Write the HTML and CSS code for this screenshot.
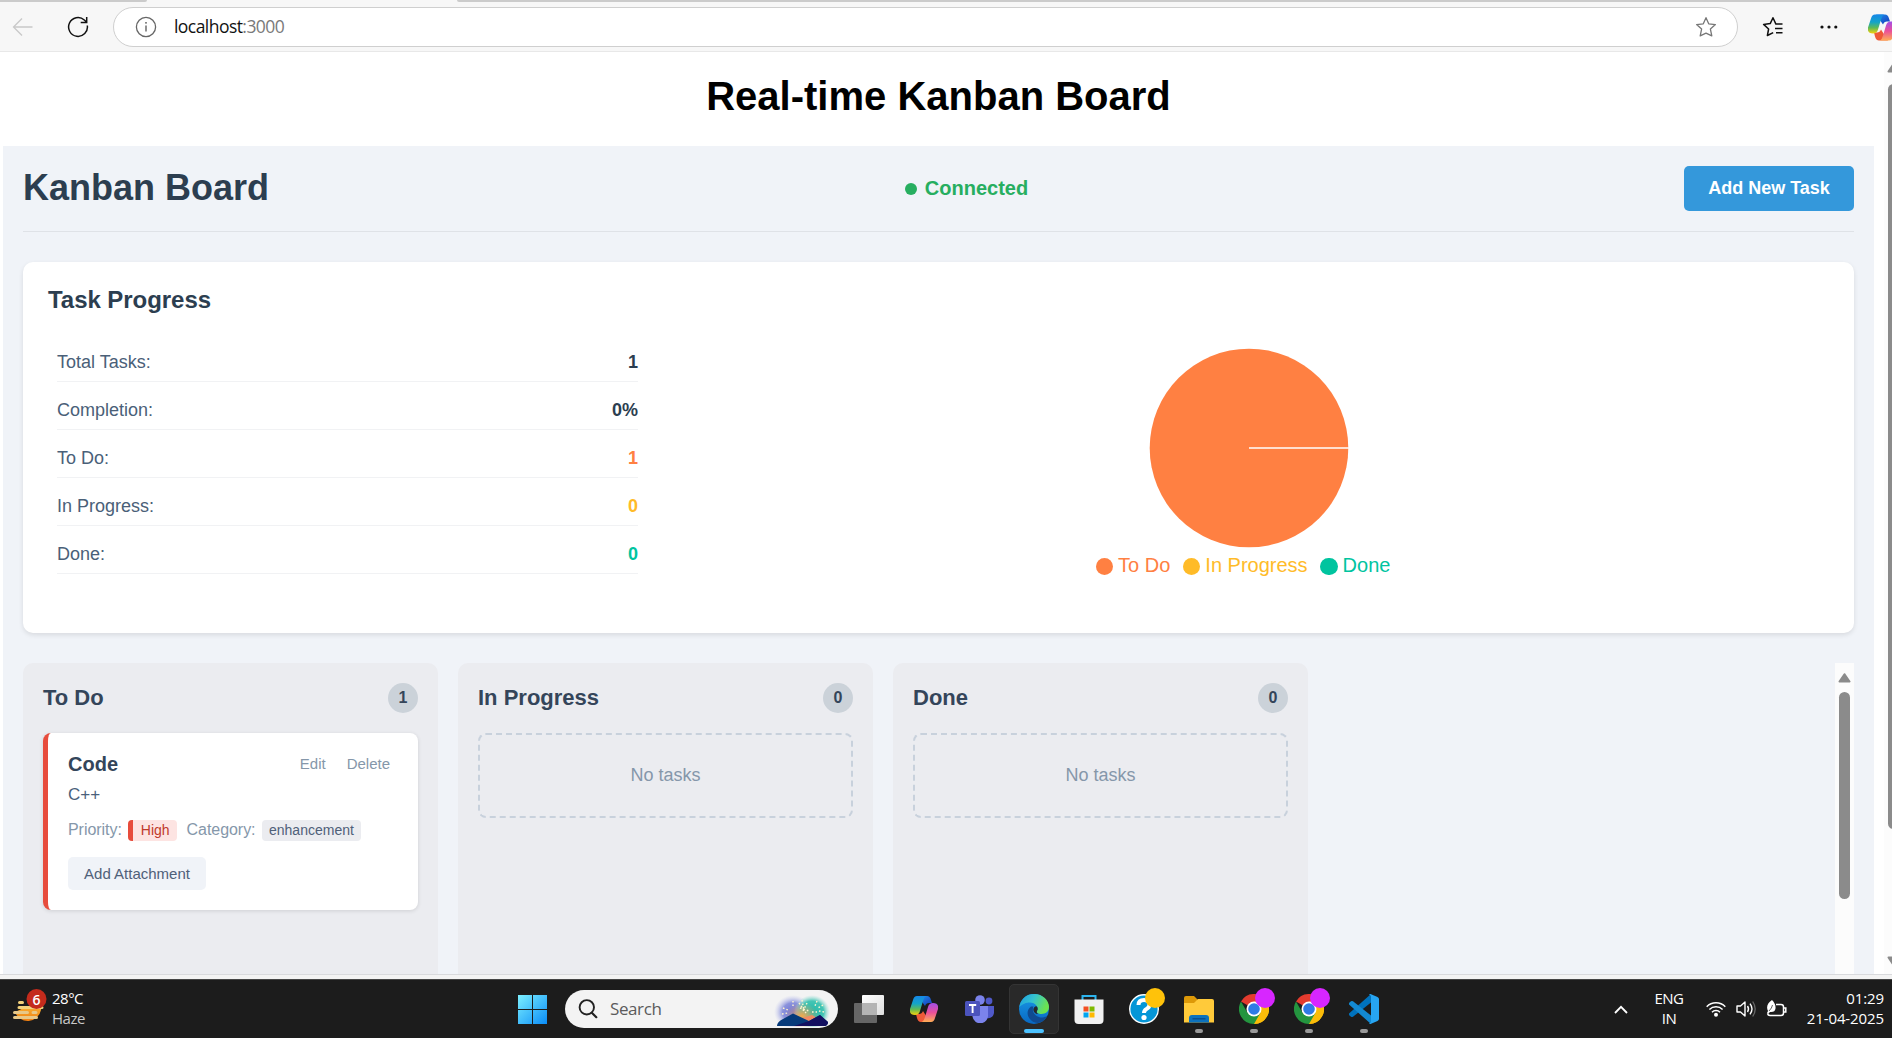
FILE: index.html
```html
<!DOCTYPE html>
<html lang="en">
<head>
<meta charset="utf-8">
<title>Kanban Board</title>
<link rel="stylesheet" href="styles.css">
</head>
<body>
<header class="browser">
  <div class="tabs"><span class="tab-left"></span><span class="tab-right"></span></div>
  <div class="toolbar">
    <svg class="back" width="22" height="20" viewBox="0 0 22 20"><path d="M20.5 10H1.5M10 1.5L1.5 10l8.500 8.500" fill="none" stroke="#c9c9c9" stroke-width="1.3"/></svg>
    <svg class="reload" width="22" height="22" viewBox="0 0 22 22"><path d="M20.300 9.500a9.400 9.400 0 1 1-3-5.500l2.500 2.300M19.700 1v5.500h-6" fill="none" stroke="#111" stroke-width="1.500"/></svg>
    <div class="address">
      <svg width="22" height="22" viewBox="0 0 22 22"><circle cx="11" cy="11" r="9.600" fill="none" stroke="#666" stroke-width="1.300"/><path d="M11 9.500v6" stroke="#555" stroke-width="1.300"/><circle cx="11" cy="6.800" r=".9" fill="#555"/></svg>
      <span class="url">localhost<span class="port">:3000</span></span>
      <svg class="star" width="22" height="22" viewBox="0 0 22 22"><path d="M11 1.700l2.700 6.100 6.700.8-5 4.500 1.400 6.800L11 17.200l-5.800 2.700 1.400-6.800-5-4.500 6.700-.8z" fill="none" stroke="#777" stroke-width="1.300" stroke-linejoin="round"/></svg>
    </div>
    <svg class="favorites" width="22" height="22" viewBox="0 0 22 22"><path d="M20.500 8.100h-6.600L11 1.700 8.200 7.600l-6.600.8 5 4.600-1.200 6.500 5.800-2.900" fill="none" stroke="#111" stroke-width="1.500" stroke-linejoin="round"/><path d="M13 12.500h7.500M14 16.700h6.500" stroke="#111" stroke-width="1.500"/></svg>
    <svg class="more" width="18" height="6" viewBox="0 0 18 6"><g fill="#111"><circle cx="2" cy="3" r="1.600"/><circle cx="9" cy="3" r="1.600"/><circle cx="15.800" cy="3" r="1.600"/></g></svg>
    <svg class="copilot-top" width="28" height="27" viewBox="0 0 28 26"><use href="#copilot"/></svg>
  </div>
</header>

<div class="viewport">
  <main class="page">
    <h1 class="page-title">Real-time Kanban Board</h1>
    <div class="app">
      <div class="app-head">
        <h2 class="app-title">Kanban Board</h2>
        <div class="status"><span class="status-dot"></span>Connected</div>
        <button class="btn-add">Add New Task</button>
      </div>
      <section class="progress">
        <h3 class="progress-title">Task Progress</h3>
        <div class="progress-body">
          <div class="stats">
            <div class="stat"><span>Total Tasks:</span><b>1</b></div>
            <div class="stat"><span>Completion:</span><b>0%</b></div>
            <div class="stat"><span>To Do:</span><b class="todo">1</b></div>
            <div class="stat"><span>In Progress:</span><b class="doing">0</b></div>
            <div class="stat"><span>Done:</span><b class="done">0</b></div>
          </div>
          <div class="chart">
            <svg class="pie" width="200" height="200" viewBox="0 0 200 200"><circle cx="100" cy="100" r="99.300" fill="#ff8042"/><path d="M100 99.900h100" stroke="#fff" stroke-width="1.500"/></svg>
            <div class="legend">
              <span class="key todo"><i></i>To Do</span>
              <span class="key doing"><i></i>In Progress</span>
              <span class="key done"><i></i>Done</span>
            </div>
          </div>
        </div>
      </section>
      <div class="board">
        <section class="column">
          <div class="column-head"><h3>To Do</h3><span class="count">1</span></div>
          <article class="task">
            <div class="task-head"><h4>Code</h4><span class="action">Edit</span><span class="action">Delete</span></div>
            <p class="task-text">C++</p>
            <div class="meta"><span class="label">Priority:</span><span class="badge high">High</span><span class="label cat">Category:</span><span class="badge">enhancement</span></div>
            <button class="btn-attach">Add Attachment</button>
          </article>
        </section>
        <section class="column">
          <div class="column-head"><h3>In Progress</h3><span class="count">0</span></div>
          <div class="empty">No tasks</div>
        </section>
        <section class="column">
          <div class="column-head"><h3>Done</h3><span class="count">0</span></div>
          <div class="empty">No tasks</div>
        </section>
        <div class="board-scroll">
          <svg width="13" height="10" viewBox="0 0 13 10"><path d="M6.500 1.200L11.500 8.500h-10z" fill="#8b8b8b" stroke="#8b8b8b" stroke-width="2" stroke-linejoin="round"/></svg>
          <span class="thumb"></span>
        </div>
      </div>
    </div>
  </main>
  <div class="page-scroll">
    <svg width="13" height="10" viewBox="0 0 13 10"><path d="M6.500 1.200L11.500 8.500h-10z" fill="#8b8b8b" stroke="#8b8b8b" stroke-width="2" stroke-linejoin="round"/></svg>
    <span class="page-thumb"></span>
    <svg class="down" width="13" height="10" viewBox="0 0 13 10"><path d="M6.500 8.800L11.500 1.500h-10z" fill="#8b8b8b" stroke="#8b8b8b" stroke-width="2" stroke-linejoin="round"/></svg>
  </div>
</div>
<div class="window-edge"></div>

<footer class="taskbar">
  <div class="weather">
    <svg width="36" height="38" viewBox="0 0 36 38">
      <defs><linearGradient id="sun" x2="0" y2="1"><stop stop-color="#f9b233"/><stop offset="1" stop-color="#ef7d10"/></linearGradient></defs>
      <path d="M2 20a14.500 14.500 0 0 0 27 4l2-7-6-3H14z" fill="#1c1c1c"/>
      <path d="M3 24a13.500 13.500 0 0 0 26-2l.5-4H16z" fill="url(#sun)"/>
      <g stroke-width="3" stroke-linecap="round"><path d="M7.500 14.500h3M7 19.500h23" stroke="#f3d27c"/><path d="M2.500 24.500h13M21 24.500h3M2.500 29.500h22" stroke="#e8c888"/></g>
      <circle cx="24.500" cy="11" r="10" fill="#c42b1c"/><text x="24.500" y="16.500" text-anchor="middle" class="notice">6</text>
    </svg>
    <div class="weather-text"><span>28°C</span><span class="dim">Haze</span></div>
  </div>
  <svg class="start" width="29" height="29" viewBox="0 0 29 29"><defs><linearGradient id="win" x2="1" y2="1"><stop stop-color="#7cf0ff"/><stop offset="1" stop-color="#0a8cf7"/></linearGradient></defs><path d="M0 0h14v14H0zM15 0h14v14H15zM0 15h14v14H0zM15 15h14v14H15z" fill="url(#win)"/></svg>
  <div class="search">
    <svg width="20" height="20" viewBox="0 0 20 20"><circle cx="8.800" cy="8.300" r="7.200" fill="none" stroke="#222" stroke-width="1.900"/><path d="M13.800 13.700l4.500 4.500" stroke="#222" stroke-width="2.200" stroke-linecap="round"/></svg>
    <span>Search</span>
    <svg class="art" width="56" height="32" viewBox="0 0 56 32">
      <defs>
        <radialGradient id="glowA"><stop stop-color="#6d74d4"/><stop offset=".55" stop-color="#8b93dc"/><stop offset="1" stop-color="#c8cbee" stop-opacity="0"/></radialGradient>
        <radialGradient id="glowB"><stop stop-color="#1fb7a8"/><stop offset=".65" stop-color="#45c5b4"/><stop offset="1" stop-color="#9de0d7" stop-opacity="0"/></radialGradient>
        <radialGradient id="glowC"><stop stop-color="#f2a84c"/><stop offset="1" stop-color="#e9a46d" stop-opacity="0"/></radialGradient>
      </defs>
      <ellipse cx="19" cy="17" rx="19" ry="17" fill="url(#glowA)"/><ellipse cx="38" cy="17" rx="18" ry="17" fill="url(#glowB)"/><ellipse cx="28" cy="21" rx="17" ry="13" fill="url(#glowC)"/>
      <path d="M28 23l7 5 8-5-5-3z" fill="#f28b61"/>
      <path d="M3 31q0-4 6-7l10-5.500L35 26l11-6 8 7q0 3-3 4z" fill="#063a7a"/><path d="M20 31l15-5 11-6 8 7q0 3-3 4z" fill="#131060"/>
      <g fill="none" stroke="#fff4cf" stroke-width="1.400" stroke-dasharray="1.600 2"><path d="M8 19l6-1M9 13l5 2M19 6v5M25 8l7 10M28 5l2 11M33 8l-4 8M26 13l9 3M38 17h5M43 6l-2 5M49 10l-5 3M50 17l-5-1"/></g>
    </svg>
  </div>
  <nav class="apps">
    <div class="slot"><svg width="30" height="28" viewBox="0 0 30 28"><defs><linearGradient id="pane" x2="1" y2="1"><stop stop-color="#fff"/><stop offset="1" stop-color="#dedede"/></linearGradient></defs><rect x="8" width="22" height="20" rx="1" fill="url(#pane)"/><rect y="8" width="23" height="20" rx="1" fill="#666"/><path d="M8 8h15v12H8z" fill="#b4b4b4"/></svg></div>
    <div class="slot"><svg width="28" height="26" viewBox="0 0 28 26">
      <defs>
        <linearGradient id="cpA" x2="0" y2="1"><stop stop-color="#1687e8"/><stop offset=".4" stop-color="#13a4c9"/><stop offset=".7" stop-color="#5fba55"/><stop offset="1" stop-color="#f7d20c"/></linearGradient>
        <linearGradient id="cpB" x2="0" y2="1"><stop stop-color="#a24ee8"/><stop offset=".5" stop-color="#ea4f9a"/><stop offset="1" stop-color="#ffae55"/></linearGradient>
        <linearGradient id="cpC" x2="1" y2="1"><stop stop-color="#1e93ee"/><stop offset="1" stop-color="#1636b8"/></linearGradient>
        <g id="copilot"><path d="M8 0h9q3 0 4 4l1 3h-3q-3 0-4 3z" fill="url(#cpC)"/><path d="M20 26h-9q-3 0-4-4l-1-4h3q3 0 4-3z" fill="#ef5a38"/><path d="M7 0h9q-2 1-3 5l-3 10q-1 4-5 4-6 0-5-6L3 4q1-4 4-4z" fill="url(#cpA)"/><path d="M21 26h-9q2-1 3-5l3-10q1-4 5-4 6 0 5 6l-3 9q-1 4-4 4z" fill="url(#cpB)"/></g>
      </defs><use href="#copilot"/></svg></div>
    <div class="slot"><svg width="30" height="28" viewBox="0 0 30 28"><circle cx="16" cy="5" r="4.800" fill="#7b83eb"/><circle cx="25" cy="6" r="3.400" fill="#5059c9"/><path d="M20 11h10v6.500a6 6 0 0 1-9 5z" fill="#5059c9"/><path d="M8 11h16v8.500a7.500 7.500 0 0 1-15.500 2z" fill="#7b83eb"/><rect x="1" y="6" width="15" height="15" rx="1.500" fill="#4b53bc"/><path d="M5 10h7.200M8.600 10v8" stroke="#fff" stroke-width="1.900"/></svg></div>
    <div class="slot active"><svg width="30" height="30" viewBox="0 0 30 30">
      <defs><linearGradient id="edA" x2="1" y2=".35"><stop stop-color="#1b9de2"/><stop offset=".5" stop-color="#35c3cf"/><stop offset="1" stop-color="#6be450"/></linearGradient><linearGradient id="edB" x2="0" y2="1"><stop stop-color="#1a9ae8"/><stop offset="1" stop-color="#0868c2"/></linearGradient></defs>
      <circle cx="15" cy="15" r="15" fill="url(#edB)"/><path d="M.3 13C1.800 4.500 8 0 15 0c9 0 15 6.500 15 12.800 0 5-3.500 7.200-7.500 7.200-3 0-5.800-1.200-4.300-3.500C20 13.500 16.500 7.800 9.500 8.500 5.500 8.900 2.400 11 .3 13z" fill="url(#edA)"/><path d="M12 12.500c-4 3-4.500 8-1.500 12 3 4.200 9 6.400 14 2 2-1.500 3.500-3.700 3.700-4.500-5 2.700-10 1.500-12.700-2-2-2.500-2-5.500-1-7.500z" fill="#0f4a91"/><path d="M15.500 13q2-1.500 3 .5.800 1.500-.5 3.500-1 2 1.500 3-2.500.2-4-1.500-2.300-3 0-5.500z" fill="#26282a"/><path d="M30 21l-1 4-3 3 2.200-5z" fill="#26282a"/></svg><span class="running"></span></div>
    <div class="slot"><svg width="30" height="30" viewBox="0 0 30 30"><path d="M8.500 6V2h13v4" fill="none" stroke="#2cb4ee" stroke-width="2"/><path d="M.5 5.500h29V26q0 4-4 4h-21q-4 0-4-4z" fill="#f1f1f1"/><path d="M9.500 12.500h5v5h-5z" fill="#f25022"/><path d="M15.500 12.500h5v5h-5z" fill="#7fba00"/><path d="M9.500 18.500h5v5h-5z" fill="#00a4ef"/><path d="M15.500 18.500h5v5h-5z" fill="#ffb900"/></svg></div>
    <div class="slot"><svg width="30" height="30" viewBox="0 0 30 30"><circle cx="15" cy="15" r="14.300" fill="#0596d7" stroke="#fff" stroke-width="1.400"/><path d="M9.500 11q0-5 5.500-5t5.500 4.500q0 3-3 4.500-2.500 1.300-2.500 4" fill="none" stroke="#fff" stroke-width="4"/><circle cx="15" cy="23.500" r="2.600" fill="#fff"/></svg><span class="bubble gold"></span></div>
    <div class="slot"><svg width="30" height="30" viewBox="0 0 30 30"><path d="M0 4q0-2 2-2h8l4 4-3 6H0z" fill="#dd9908"/><path d="M0 9h10l4-4h14q2 0 2 2v21.500H0z" fill="#ffca3a"/><path d="M5 28.500V24q0-3 3-3h14q3 0 3 3v4.500z" fill="#0c72bd"/><path d="M8.500 24.800h13" stroke="#0a4a8a" stroke-width="1.300"/></svg><span class="running idle"></span></div>
    <div class="slot"><svg width="30" height="30" viewBox="0 0 30 30"><g id="chrome"><path d="M15 15L2 7.500A15 15 0 0 1 28 7.500z" fill="#e33b2e"/><path d="M15 15L28 7.500A15 15 0 0 1 15 30z" fill="#fbbc09"/><path d="M15 7.500h13A15 15 0 0 1 15 30l6.500-11.300z" fill="#fbbc09"/><path d="M2 7.500A15 15 0 0 0 15 30l6.500-11.300H8.500z" fill="#24953f"/><circle cx="15" cy="15" r="7.500" fill="#fff"/><circle cx="15" cy="15" r="5.800" fill="#2f7be5"/></g></svg><span class="bubble"></span><span class="running idle"></span></div>
    <div class="slot"><svg width="30" height="30" viewBox="0 0 30 30"><use href="#chrome"/></svg><span class="bubble"></span><span class="running idle"></span></div>
    <div class="slot"><svg width="30" height="30" viewBox="0 0 30 30"><path d="M22 0L0 19.500q-.3 1.500.5 2L2 22.800q1 .5 2 0L22 8.500z" fill="#0072bd"/><path d="M22 30L0 10.500q-.3-1.500.5-2L2 7.200q1-.5 2 0L22 21.500z" fill="#1389d2"/><path d="M21.500 0L28.500 3q1.500.8 1.500 2v20q0 1.200-1.500 2l-7 3q-1 0-1.500-1 2 .5 2-1.500V2.500q0-2-2-1.500.5-1 1.500-1z" fill="#27a5f2"/></svg><span class="running idle"></span></div>
  </nav>
  <div class="tray">
    <svg class="chev" width="14" height="9" viewBox="0 0 14 9"><path d="M1 8l6-6.200L13 8" fill="none" stroke="#fff" stroke-width="1.800"/></svg>
    <div class="lang"><span>ENG</span><span>IN</span></div>
    <svg class="wifi" width="20" height="16" viewBox="0 0 20 16"><g fill="none" stroke="#fff" stroke-width="1.500"><path d="M.7 5.700a13.200 13.200 0 0 1 18.600 0M3.400 8.500a9.400 9.400 0 0 1 13.200 0M6 11.200a5.600 5.600 0 0 1 8 0"/></g><circle cx="10" cy="13.700" r="2" fill="#fff"/></svg>
    <svg class="sound" width="20" height="18" viewBox="0 0 20 18"><path d="M1 6h3.500L9 2v14l-4.500-4H1z" fill="none" stroke="#fff" stroke-width="1.400" stroke-linejoin="round"/><path d="M11.500 6q2 3 0 6M14 3.700q4 5.300 0 10.600" fill="none" stroke="#fff" stroke-width="1.400"/><path d="M16.700 1.500q5 7.500 0 15" fill="none" stroke="#666" stroke-width="1.300"/></svg>
    <svg class="battery" width="21" height="18" viewBox="0 0 21 18"><path d="M10 4.500h5q2.500 0 2.500 2.500v6q0 2.500-2.500 2.500H4q-2 0-2.500-2M17.800 8h2v4h-2" fill="none" stroke="#fff" stroke-width="1.500"/><path d="M6 0Q10 4 9.500 8.500 9 12.500 4 12l-2 2-1-1 1-2Q-1 5 6 0z" fill="#fff"/><path d="M3 11q3-3 3.500-6" stroke="#1c1c1c" stroke-width=".7" fill="none"/></svg>
    <div class="clock"><span>01:29</span><span>21-04-2025</span></div>
  </div>
</footer>
</body>
</html>
```
FILE: styles.css
```css
* { box-sizing: border-box; }
body {
  margin: 0;
  width: 1892px;
  height: 1038px;
  overflow: hidden;
  display: flex;
  flex-direction: column;
  background: #fff;
  font-family: "Liberation Sans", Arial, sans-serif;
}
h1, h2, h3, h4, p { margin: 0; }
svg { display: block; flex: none; }
button { border: 0; font-family: inherit; padding: 0; }

/* browser chrome */
.browser { height: 52px; flex: none; background: #f7f7f7; border-bottom: 1px solid #e8e8e8; overflow: hidden; }
.tabs { display: flex; justify-content: space-between; height: 2px; }
.tab-left { width: 147px; background: #cbcbcb; border-radius: 0 0 3px 0; }
.tab-right { width: 1435px; background: #cbcbcb; border-radius: 0 0 0 3px; }
.toolbar { display: flex; align-items: center; height: 50px; }
.back { margin-left: 12px; }
.reload { margin-left: 33px; }
.address {
  display: flex; align-items: center; flex: none;
  width: 1625px; height: 40px; margin-left: 24px; padding: 0 20px 0 21px;
  background: #fff; border: 1px solid #cfcfcf; border-radius: 20px;
}
.url { margin-left: 17px; margin-top: -2px; font: 17.500px/24px "Open Sans", sans-serif; letter-spacing: -.55px; color: #111; }
.port { color: #7a7a7a; }
.star { margin-left: auto; }
.favorites { margin-left: 24px; }
.more { margin-left: 36px; }
.copilot-top { margin-left: 30px; }

/* page */
.viewport { display: flex; flex: none; height: 922px; overflow: hidden; }
.page { width: 1884px; flex: none; padding-left: 3px; }
.page-title { width: 1871px; height: 94px; padding-top: 21px; text-align: center; font-size: 40px; line-height: 46px; color: #000; }
.app { width: 1871px; height: 828px; padding: 20px 20px 0; background: #f0f3f8; }
.app-head { display: flex; justify-content: space-between; align-items: center; height: 66px; padding-bottom: 20px; border-bottom: 1px solid #dfe2e7; }
.app-title { width: 245px; margin-top: -2px; font-size: 36px; line-height: 42px; color: #2c3e50; white-space: nowrap; }
.status { display: flex; align-items: center; gap: 8px; margin-right: 19px; font-size: 20px; font-weight: bold; color: #27ae60; }
.status-dot { width: 12px; height: 12px; border-radius: 50%; background: #27ae60; }
.btn-add { width: 170px; height: 45px; border-radius: 5px; background: #3498db; color: #fff; font-size: 18px; font-weight: bold; }

.progress { height: 371px; margin-top: 30px; padding: 24px 25px; border-radius: 10px; background: #fff; box-shadow: 0 2px 5px rgba(0,0,0,.1); }
.progress-title { font-size: 24px; line-height: 28px; letter-spacing: -.05px; color: #2c3e50; }
.progress-body { display: flex; margin-top: 20px; }
.stats { width: 581px; margin-left: 9px; }
.stat { display: flex; justify-content: space-between; height: 48px; padding-top: 18px; border-bottom: 1px solid #f1f2f4; font-size: 18px; line-height: 21px; color: #4a6078; }
.stat b { color: #2c3e50; }
.stat b.todo, .todo { color: #ff8042; }
.stat b.doing, .doing { color: #ffbb28; }
.stat b.done, .done { color: #00c49f; }
.chart { display: flex; flex-direction: column; align-items: center; flex: 1; margin-left: 30px; margin-top: 14px; }
.legend { display: flex; gap: 12.500px; margin-top: 6px; margin-right: 11px; }
.key { display: flex; align-items: center; gap: 5px; font-size: 20px; line-height: 23px; white-space: nowrap; }
.key i { width: 17.500px; height: 17.500px; margin-top: 2px; border-radius: 50%; background: currentColor; }

.board { display: flex; gap: 20px; height: 311px; margin-top: 30px; }
.column { width: 415px; padding: 20px; background: #ebecf0; border-radius: 10px 10px 0 0; }
.column-head { display: flex; justify-content: space-between; align-items: center; height: 30px; }
.column-head h3 { font-size: 22px; line-height: 26px; color: #34455a; }
.count { width: 30px; height: 30px; border-radius: 50%; background: #cbd2d9; text-align: center; font-size: 16px; line-height: 30px; font-weight: bold; color: #34455a; }
.task { height: 177px; margin-top: 20px; padding: 20px; background: #fff; border-left: 5px solid #e74c3c; border-radius: 8px; box-shadow: 0 1px 4px rgba(0,0,0,.12); }
.task-head { display: flex; align-items: center; height: 22px; padding-right: 8px; }
.task-head h4 { flex: 1; font-size: 20px; line-height: 23px; color: #34455a; }
.action { margin: -2px 0 0 21px; font-size: 15px; color: #8597aa; }
.task-text { margin-top: 10px; font-size: 17px; line-height: 20px; color: #4a5f7b; }
.meta { display: flex; align-items: center; height: 21px; margin-top: 15px; font-size: 16px; color: #8597aa; }
.label { margin-top: -2px; letter-spacing: -.05px; }
.cat { margin-left: 10px; }
.badge { height: 21px; margin-left: 6px; padding: 0 7.500px; border-radius: 4px; background: #ebecf0; font-size: 14px; line-height: 21px; color: #4f6079; }
.badge.high { padding: 0 7px 0 8px; border-left: 5px solid #e74c3c; background: #fde4e2; color: #c0392b; }
.btn-attach { display: block; width: 138px; height: 33px; margin-top: 16px; border-radius: 5px; background: #f0f3f8; font-size: 15px; color: #4f6079; }
.empty { display: flex; align-items: center; justify-content: center; height: 85px; margin-top: 20px; border: 2px dashed #c8d1dc; border-radius: 8px; font-size: 18px; color: #8597aa; }
.board-scroll { display: flex; flex-direction: column; align-items: center; width: 19px; margin-left: auto; padding-top: 10px; background: #fcfcfc; }
.thumb { width: 11px; height: 207px; margin-top: 9px; border-radius: 6px; background: #8b8b8b; }
.page-scroll { width: 19px; flex: none; height: 922px; padding: 11px 0 0 3px; background: #fcfcfc; }
.page-thumb { display: block; width: 11px; height: 745px; margin: 11px 0 0 1px; border-radius: 6px; background: #8b8b8b; }
.down { margin-top: 127px; }
.window-edge { height: 5px; flex: none; background: #f3f3f3; border-top: 1px solid #d9dadd; }

/* taskbar */
.taskbar { display: flex; align-items: center; height: 59px; flex: none; background: #1c1c1c; border-top: 1px solid #454545; color: #fff; font: 15px/20px "Open Sans", sans-serif; }
.weather { display: flex; align-items: center; width: 506px; padding-left: 12px; gap: 4px; }
.weather svg { margin-top: -4px; }
.weather-text { display: flex; flex-direction: column; margin-top: -2px; letter-spacing: -.5px; }
.dim { color: #c9c9c9; }
.notice { font: 600 14px "Open Sans", sans-serif; fill: #fff; }
.start { margin-left: 12px; }
.search { display: flex; align-items: center; width: 273px; height: 38px; margin-left: 18px; padding-left: 13px; border-radius: 19px; background: #f3f3f3; color: #5b5b5b; font-size: 17px; letter-spacing: -.4px; }
.search span { margin-left: 12px; }
.art { margin: 4px 8px 0 auto; }
.apps { display: flex; margin-left: 6px; }
.slot { position: relative; display: flex; align-items: center; justify-content: center; width: 50px; height: 50px; margin-right: 5px; border-radius: 5px; }
.slot.active { background: #292929; border: 1px solid #343434; }
.running { position: absolute; bottom: 0; left: 50%; width: 20px; height: 4px; margin-left: -10px; border-radius: 2px; background: #4cc2ff; }
.running.idle { bottom: 1px; width: 8px; margin-left: -4px; background: #9a9a9a; }
.bubble { position: absolute; left: 26px; top: 4px; width: 20px; height: 20px; border-radius: 50%; background: #d726ff; }
.bubble.gold { background: #ffc20a; }
.tray { display: flex; align-items: center; flex: 1; padding-right: 8px; }
.chev { margin-left: auto; }
.lang, .clock { display: flex; flex-direction: column; margin-top: -2px; }
.lang { width: 40px; margin-left: 21px; align-items: center; letter-spacing: -.5px; }
.wifi { margin-left: 17px; }
.sound { margin-left: 10px; }
.battery { margin-left: 10px; }
.clock { align-items: flex-end; width: 88px; margin-left: 9px; letter-spacing: -.1px; }
```
